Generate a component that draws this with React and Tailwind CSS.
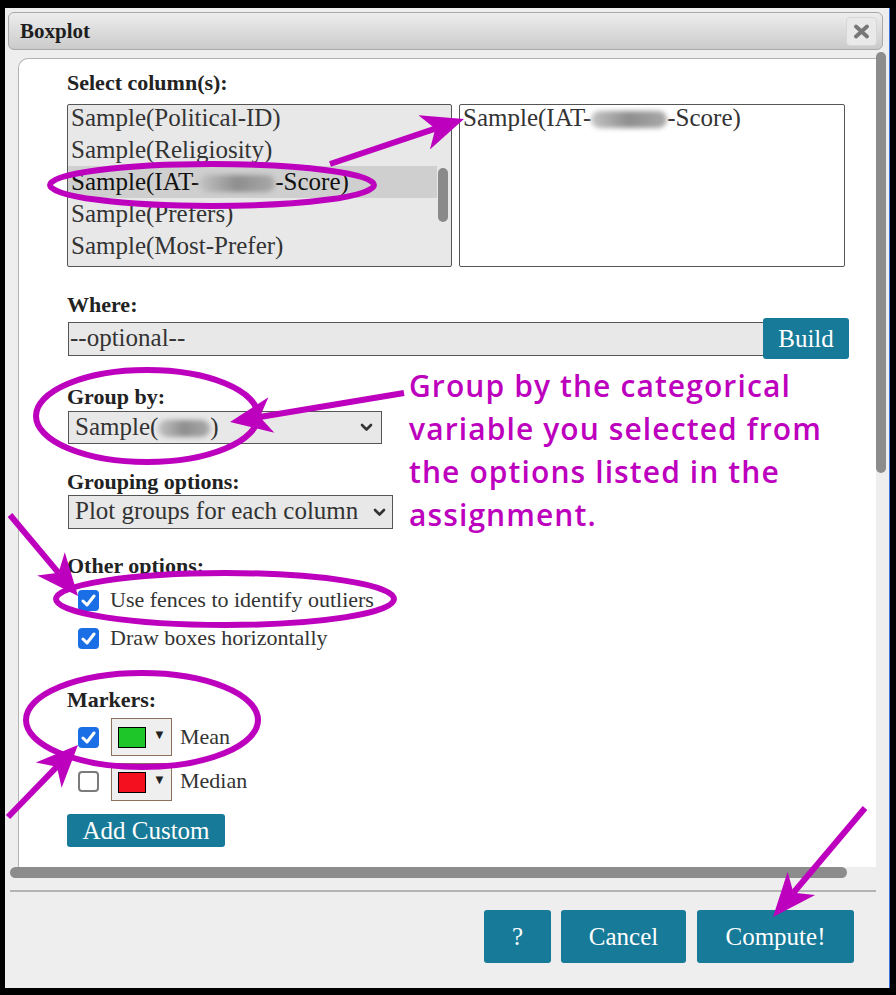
const MAG = "#bd00bd";

function Arrow({ x1, y1, x2, y2, len = 40, w = 34 }) {
  const dx = x2 - x1;
  const dy = y2 - y1;
  const L = Math.hypot(dx, dy);
  const ux = dx / L;
  const uy = dy / L;
  const px = -uy;
  const py = ux;
  const bx = x2 - ux * len;
  const by = y2 - uy * len;
  const nx = x2 - ux * len * 0.72;
  const ny = y2 - uy * len * 0.72;
  const pts = [
    [x2, y2],
    [bx + (px * w) / 2, by + (py * w) / 2],
    [nx, ny],
    [bx - (px * w) / 2, by - (py * w) / 2],
  ]
    .map((p) => p.join(","))
    .join(" ");
  return (
    <g>
      <line x1={x1} y1={y1} x2={nx} y2={ny} stroke={MAG} strokeWidth="6" />
      <polygon points={pts} fill={MAG} />
    </g>
  );
}

function Blob({ className }) {
  return (
    <span
      className={
        "inline-block h-[17px] align-[-2px] rounded-full bg-gradient-to-r from-[#c4c4c4] via-[#8e8e8e] to-[#a9a9a9] blur-[2.5px] " +
        className
      }
    />
  );
}

function Check({ checked }) {
  if (!checked) {
    return <div className="w-[21px] h-[21px] shrink-0 rounded-[4px] border-2 border-[#7b7b7b] bg-white" />;
  }
  return (
    <div className="w-[21px] h-[21px] shrink-0 rounded-[4px] bg-[#1b6fe6] flex items-center justify-center">
      <svg width="15" height="13" viewBox="0 0 15 13">
        <path d="M2 7 L6 11 L13 2" fill="none" stroke="white" strokeWidth="3" strokeLinecap="round" strokeLinejoin="round" />
      </svg>
    </div>
  );
}

function Chevron() {
  return (
    <svg width="13" height="9" viewBox="0 0 13 9" className="shrink-0">
      <path d="M2 2 L6.5 6.5 L11 2" fill="none" stroke="#333" strokeWidth="2.6" strokeLinecap="round" strokeLinejoin="round" />
    </svg>
  );
}

function Picker({ color }) {
  return (
    <div className="w-[61px] h-[38px] shrink-0 border border-[#8d705b] bg-[#efefef] flex items-start pl-[6px] pt-[8px]">
      <div className={"w-[28px] h-[21px] border border-black " + color} />
      <span className="ml-[7px] text-[13px] leading-[14px] text-[#222] mt-[1px]">▼</span>
    </div>
  );
}

function Btn({ children, className }) {
  return (
    <div
      className={
        "bg-[#177a98] text-white rounded-[3px] flex items-center justify-center text-[25px] leading-none " + className
      }
    >
      {children}
    </div>
  );
}

export default function App() {
  const label = "text-[22px] font-bold leading-[26px] text-[#222]";
  return (
    <div className="relative w-[896px] h-[995px] bg-black overflow-hidden font-['Liberation_Serif',serif] text-[#333]">
      <div className="pt-[8px] pl-[5px]">
        <div className="w-[885px] h-[980px] bg-[#eeeeee] border-r border-[#3a72e0] flex flex-col">
          {/* title bar */}
          <div className="mt-[4px] ml-[3px] mr-[6px] h-[38px] rounded-[6px] border border-[#a8a8a8] bg-gradient-to-b from-[#ededed] to-[#cbcbcb] flex items-center justify-between pl-[11px] pr-[5px]">
            <span className="text-[21px] font-bold text-[#1e1e1e] leading-none">Boxplot</span>
            <div className="w-[31px] h-[29px] rounded-[4px] bg-[#e9e9e9] border border-[#d6d6d6] flex items-center justify-center">
              <svg width="17" height="15" viewBox="0 0 17 15">
                <path d="M3 2.5 L14 12.5 M14 2.5 L3 12.5" stroke="#777" strokeWidth="3.8" strokeLinecap="round" />
              </svg>
            </div>
          </div>

          {/* body */}
          <div className="mt-[2px] h-[815px] flex">
            <div className="flex-1 pl-[13px] pt-[6px] flex">
              <div className="flex-1 bg-white border-l border-t border-[#b3b3b3] rounded-tl-[10px] pl-[48px] pt-[11px] flex flex-col">
                <div className={label}>Select column(s):</div>
                <div className="mt-[8px] flex">
                  <div className="w-[385px] h-[163px] border border-[#555] rounded-[2px] bg-[#e8e8e8] flex text-[25px] leading-[32px] text-[#333] overflow-hidden">
                    <div className="flex-1 pl-[3px] -mt-[3px]">
                      <div>Sample(Political-ID)</div>
                      <div>Sample(Religiosity)</div>
                      <div className="bg-[#cfcfcf] text-[#111] -ml-[3px] pl-[3px]">
                        Sample(IAT-<Blob className="w-[76px]" />-Score)
                      </div>
                      <div>Sample(Prefers)</div>
                      <div>Sample(Most-Prefer)</div>
                    </div>
                    <div className="w-[14px] shrink-0 pt-[63px] pl-[1px]">
                      <div className="w-[10px] h-[54px] rounded-full bg-[#8a8a8a]" />
                    </div>
                  </div>
                  <div className="ml-[7px] w-[386px] h-[163px] border border-[#555] rounded-[2px] bg-white text-[25px] leading-[26px] text-[#333] pl-[3px]">
                    Sample(IAT-<Blob className="w-[76px]" />-Score)
                  </div>
                </div>

                <div className={label + " mt-[25px]"}>Where:</div>
                <div className="flex items-center h-[41px]">
                  <div className="ml-[1px] w-[696px] h-[34px] border border-[#555] bg-[#e8e8e8] text-[25px] leading-[29px] pl-[1px] text-[#333]">
                    --optional--
                  </div>
                  <Btn className="-ml-[1px] w-[86px] h-[41px]">Build</Btn>
                </div>

                <div className={label + " mt-[25px]"}>Group by:</div>
                <div className="mt-[1px] ml-[1px] w-[314px] h-[33px] border border-[#555] bg-[#e8e8e8] flex items-center justify-between pl-[6px] pr-[8px] text-[25px] leading-none">
                  <span className="-mt-[3px]">
                    Sample(<Blob className="w-[52px]" />)
                  </span>
                  <Chevron />
                </div>

                <div className={label + " mt-[25px]"}>Grouping options:</div>
                <div className="ml-[1px] w-[325px] h-[34px] border border-[#555] bg-[#e8e8e8] flex items-center justify-between pl-[6px] pr-[6px] text-[25px] leading-none">
                  <span className="-mt-[3px]">Plot groups for each column</span>
                  <Chevron />
                </div>

                <div className={label + " mt-[24px]"}>Other options:</div>
                <div className="mt-[8px] h-[26px] flex items-center pl-[11px] text-[22px]">
                  <Check checked />
                  <span className="ml-[11px] -mt-[2px]">Use fences to identify outliers</span>
                </div>
                <div className="mt-[12px] h-[26px] flex items-center pl-[11px] text-[22px]">
                  <Check checked />
                  <span className="ml-[11px] -mt-[2px]">Draw boxes horizontally</span>
                </div>

                <div className={label + " mt-[36px]"}>Markers:</div>
                <div className="mt-[5px] h-[38px] flex items-center pl-[11px] text-[22px]">
                  <Check checked />
                  <div className="ml-[12px]">
                    <Picker color="bg-[#1fc62a]" />
                  </div>
                  <span className="ml-[8px] -mt-[2px]">Mean</span>
                </div>
                <div className="mt-[7px] h-[37px] flex items-center pl-[11px] text-[22px]">
                  <Check checked={false} />
                  <div className="ml-[12px]">
                    <Picker color="bg-[#f5101f]" />
                  </div>
                  <span className="ml-[8px] -mt-[2px]">Median</span>
                </div>
                <Btn className="mt-[14px] w-[158px] h-[33px]">Add Custom</Btn>
              </div>
            </div>
            <div className="w-[10px] mr-[3px] flex flex-col">
              <div className="h-[421px] rounded-full bg-[#8c8c8c]" />
            </div>
          </div>

          {/* horizontal scrollbar */}
          <div className="ml-[5px] w-[837px] h-[11px] rounded-full bg-[#8c8c8c]" />
          <div className="mt-[12px] ml-[5px] w-[866px] h-[2px] bg-[#b4b4b4]" />

          {/* buttons */}
          <div className="mt-[18px] flex justify-end pr-[35px] gap-[10px]">
            <Btn className="w-[67px] h-[53px]">?</Btn>
            <Btn className="w-[125px] h-[53px]">Cancel</Btn>
            <Btn className="ml-[1px] w-[157px] h-[53px]">Compute!</Btn>
          </div>
        </div>
      </div>

      {/* annotations */}
      <div className="absolute left-[409px] top-[364px] text-[30px] leading-[43px] tracking-[1.1px] font-semibold text-[#bd00bd] font-['Open_Sans',sans-serif] pointer-events-none">
        <div>Group by the categorical</div>
        <div>variable you selected from</div>
        <div>the options listed in the</div>
        <div>assignment.</div>
      </div>
      <svg className="absolute left-0 top-0 pointer-events-none" width="896" height="995" viewBox="0 0 896 995">
        <g fill="none" stroke={MAG} strokeWidth="6">
          <ellipse cx="212" cy="185" rx="162" ry="21" />
          <ellipse cx="147" cy="416" rx="111" ry="46" />
          <ellipse cx="225" cy="599" rx="169" ry="26" />
          <ellipse cx="142" cy="720" rx="116" ry="47" />
        </g>
        <Arrow x1={330} y1={164} x2={464} y2={119} len={42} w={36} />
        <Arrow x1={404} y1={393} x2={230} y2={422} len={42} w={36} />
        <Arrow x1={10} y1={515} x2={78} y2={596} len={42} w={36} />
        <Arrow x1={8} y1={817} x2={78} y2={745} len={42} w={36} />
        <Arrow x1={865} y1={808} x2={773} y2={917} len={44} w={36} />
      </svg>
    </div>
  );
}
